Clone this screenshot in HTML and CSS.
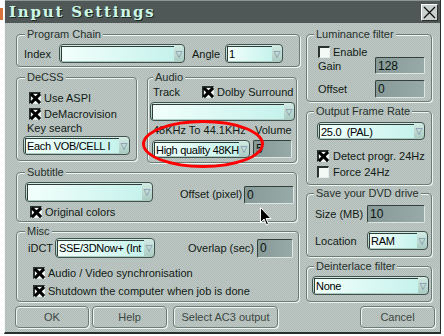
FILE: index.html
```html
<!DOCTYPE html>
<html lang="en">

<head>
    <meta charset="UTF-8">
    <title>Input Settings</title>
    <link rel="stylesheet" href="styles.css">
</head>

<body>
    <div class="edge"><div class="mark"></div></div>

    <div class="window">
        <div class="titlebar">
            <span class="title">Input Settings</span>
            <span class="close">
                <svg width="13" height="13" viewBox="0 0 13 13"><path d="M1 1L12 12M12 1L1 12" stroke="#111" stroke-width="1.3" fill="none"/></svg>
            </span>
        </div>

        <div class="main">
            <div class="col-left">
                <fieldset class="group pc">
                    <legend>Program Chain</legend>
                    <div class="pc-row">
                        <span class="pc-lbl">Index</span>
                        <div class="combo c-index"><span class="val"></span><span class="arr">▽</span></div>
                        <span class="pc-lbl2">Angle</span>
                        <div class="combo c-angle"><span class="val">1</span><span class="arr">▽</span></div>
                    </div>
                </fieldset>

                <div class="split">
                    <fieldset class="group decss">
                        <legend>DeCSS</legend>
                        <div class="decss-body">
                            <label class="chk"><span class="box on"></span>Use ASPI</label>
                            <label class="chk"><span class="box on"></span>DeMacrovision</label>
                            <div class="keylbl">Key search</div>
                            <div class="combo c-key"><span class="val">Each VOB/CELL I</span><span class="arr">▽</span></div>
                        </div>
                    </fieldset>

                    <fieldset class="group audio">
                        <legend>Audio</legend>
                        <div class="audio-body">
                            <div class="a-top">
                                <span class="a-track">Track</span>
                                <label class="chk"><span class="box on"></span>Dolby Surround</label>
                            </div>
                            <div class="combo c-track"><span class="val"></span><span class="arr">▽</span></div>
                            <div class="a-labels"><span class="a-rate">48KHz To 44.1KHz</span><span>Volume</span></div>
                            <div class="a-bottom">
                                <div class="combo c-hq"><span class="val">High quality 48KH</span><span class="arr">▽</span></div>
                                <span class="num n-vol">5</span>
                            </div>
                        </div>
                    </fieldset>
                </div>

                <fieldset class="group subtitle">
                    <legend>Subtitle</legend>
                    <div class="sub-body">
                        <div class="sub-left">
                            <div class="combo c-sub"><span class="val"></span><span class="arr">▽</span></div>
                            <label class="chk"><span class="box on"></span>Original colors</label>
                        </div>
                        <span class="sub-lbl">Offset (pixel)</span>
                        <span class="num n-sub">0</span>
                    </div>
                </fieldset>

                <fieldset class="group misc">
                    <legend>Misc</legend>
                    <div class="misc-body">
                        <div class="misc-top">
                            <span class="m-idct">iDCT</span>
                            <div class="combo c-idct"><span class="val">SSE/3DNow+ (Int</span><span class="arr">▽</span></div>
                            <span class="m-ov">Overlap (sec)</span>
                            <span class="num n-ov">0</span>
                        </div>
                        <label class="chk"><span class="box on"></span>Audio / Video synchronisation</label>
                        <label class="chk"><span class="box on"></span>Shutdown the computer when job is done</label>
                    </div>
                </fieldset>
            </div>

            <div class="col-right">
                <fieldset class="group lum">
                    <legend>Luminance filter</legend>
                    <div class="lum-body">
                        <label class="chk"><span class="box"></span>Enable</label>
                        <div class="f-row gain"><span class="flbl">Gain</span><span class="num n-lum">128</span></div>
                        <div class="f-row offset"><span class="flbl">Offset</span><span class="num n-lum">0</span></div>
                    </div>
                </fieldset>

                <fieldset class="group ofr">
                    <legend>Output Frame Rate</legend>
                    <div class="ofr-body">
                        <div class="combo c-fps"><span class="val">25.0&nbsp; (PAL)</span><span class="arr">▽</span></div>
                        <label class="chk"><span class="box on"></span>Detect progr. 24Hz</label>
                        <label class="chk"><span class="box"></span>Force 24Hz</label>
                    </div>
                </fieldset>

                <fieldset class="group dvd">
                    <legend>Save your DVD drive</legend>
                    <div class="dvd-body">
                        <div class="f-row"><span class="dlbl">Size (MB)</span><span class="num n-size">10</span></div>
                        <div class="f-row loc"><span class="dlbl">Location</span>
                            <div class="combo c-loc"><span class="val">RAM</span><span class="arr">▽</span></div>
                        </div>
                    </div>
                </fieldset>

                <fieldset class="group deint">
                    <legend>Deinterlace filter</legend>
                    <div class="deint-body">
                        <div class="combo c-deint"><span class="val">None</span><span class="arr">▽</span></div>
                    </div>
                </fieldset>
            </div>
        </div>

        <div class="buttons">
            <span class="btn ok">OK</span>
            <span class="btn help">Help</span>
            <span class="btn ac3">Select AC3 output</span>
            <span class="btn cancel">Cancel</span>
        </div>

        <!-- annotation drawn over the dialog -->
        <div class="ellipse"></div>
        <svg class="cursor" width="12" height="19" viewBox="0 0 12 19">
            <path d="M.5.5v15l3.5-3.5 2.5 6 2-1-2.5-5.5H11z" fill="#000" stroke="#fff"/>
        </svg>
    </div>
</body>

</html>
```

FILE: styles.css
```css
html,
body {
    height: 100%;
    margin: 0;
}

body {
    display: flex;
    background: #fff;
    font-family: "Liberation Sans", Arial, sans-serif;
    font-size: 11px;
    color: #111a15;
    overflow: hidden;
}

.edge {
    width: 4px;
}

.edge .mark {
    margin-top: 8px;
    width: 3px;
    height: 12px;
    background: #d7733a;
}

.window,
legend,
.btn {
    background-color: #b6c2bd;
    background-image: repeating-conic-gradient(rgba(255, 255, 255, 0.12) 0 25%, rgba(0, 0, 0, 0.04) 0 50%);
    background-size: 2px 2px;
    background-attachment: fixed;
}

.window {
    position: relative;
    width: 437px;
    height: 334px;
    box-sizing: border-box;
    border-left: 1px solid #f2f7f4;
    border-right: 1px solid #28302d;
    border-bottom: 2px solid #28302d;
}

.titlebar {
    height: 23px;
    box-sizing: border-box;
    display: flex;
    align-items: center;
    padding-left: 4px;
    background: #4f5857;
    border-top: 1px solid #8c9694;
}

.title {
    font-family: "DejaVu Serif", serif;
    font-weight: bold;
    font-size: 15px;
    letter-spacing: 1.8px;
    color: #cbf7e4;
    text-shadow: 1px 1px 0 #1c2622;
}

.close {
    margin-left: auto;
    margin-right: 2px;
    width: 17px;
    height: 17px;
    box-sizing: border-box;
    display: flex;
    align-items: center;
    justify-content: center;
    background: #c9d1cf;
    border: 1px solid;
    border-color: #fff #2a2f2e #2a2f2e #fff;
}

.main {
    display: flex;
    gap: 6px;
    padding: 5px 0 0 11px;
}

.col-left {
    width: 284px;
}

.col-right {
    width: 126px;
}

/* group boxes */

.group {
    margin: 0;
    padding: 0;
    min-width: 0;
    box-sizing: border-box;
    border: 1px solid #6c7b76;
    border-radius: 4px;
    box-shadow: inset 1px 1px 0 #edf5f1, 1px 1px 0 #edf5f1;
}

legend {
    margin-left: 8px;
    padding: 0 2px;
    height: 13px;
    line-height: 13px;
    color: #26302c;
}

.col-right legend {
    margin-left: 7px;
}

.pc {
    height: 39px;
}

.split {
    display: flex;
    margin-top: 4px;
}

.decss {
    width: 121px;
    height: 90px;
}

.audio {
    width: 150px;
    height: 92px;
    margin-left: 10px;
}

.audio legend {
    margin-left: 5px;
}

.subtitle {
    width: 281px;
    height: 56px;
    margin-top: 3px;
}

.misc {
    width: 283px;
    height: 77px;
    margin-top: 3px;
}

.lum {
    height: 74px;
}

.ofr {
    height: 80px;
    margin-top: 3px;
}

.dvd {
    height: 70px;
    margin-top: 2px;
}

.deint {
    height: 42px;
    margin-top: 3px;
}

/* controls */

.combo {
    display: flex;
    height: 19px;
    box-sizing: border-box;
    padding: 1px 0 1px 1px;
    border: 1px solid #42524c;
    border-radius: 4px;
    background: linear-gradient(#d3ece5, #a9c9c1);
}

.combo .val {
    flex: 1;
    min-width: 0;
    overflow: hidden;
    white-space: nowrap;
    padding-left: 1px;
    border-top: 1px solid #2f3c37;
    border-left: 1px solid #2f3c37;
    background: linear-gradient(90deg, #f2fffb, #c6f2ec);
    font-size: 11px;
    letter-spacing: -0.3px;
    line-height: 14px;
    color: #000;
}

.combo .arr {
    width: 10px;
    display: flex;
    align-items: center;
    justify-content: center;
    font-family: "DejaVu Sans", sans-serif;
    font-size: 9px;
    color: #6a7a98;
}

.num {
    height: 18px;
    box-sizing: border-box;
    padding-left: 2px;
    border: 1px solid;
    border-color: #34403c #dce6e2 #dce6e2 #34403c;
    border-radius: 2px;
    background: linear-gradient(90deg, #879a98, #98aaa7);
    font-size: 12px;
    line-height: 16px;
    color: #0a1410;
}

.chk {
    display: flex;
    align-items: center;
    gap: 3px;
    white-space: nowrap;
}

.box {
    position: relative;
    flex: none;
    width: 12px;
    height: 12px;
    box-sizing: border-box;
    border-style: solid;
    border-width: 2px 1px 1px 2px;
    border-color: #2a322f #e6eeea #e6eeea #2a322f;
    background: #f3faf6;
}

.box.on::before,
.box.on::after {
    content: "";
    position: absolute;
    left: -2px;
    top: 3px;
    width: 13px;
    height: 3px;
    background: #000;
    transform: rotate(45deg);
}

.box.on::after {
    transform: rotate(-45deg);
}

/* program chain */

.pc-row {
    display: flex;
    align-items: center;
    padding: 3px 0 0 7px;
}

.pc-lbl {
    width: 35px;
}

.c-index {
    width: 126px;
}

.pc-lbl2 {
    width: 33px;
    margin-left: 7px;
}

.c-angle {
    width: 58px;
}

/* decss */

.decss-body {
    padding: 6px 0 0 12px;
}

.decss-body .chk {
    height: 16px;
}

.keylbl {
    margin-left: -2px;
    height: 13px;
    line-height: 13px;
}

.c-key {
    width: 107px;
    margin: 1px 0 0 -6px;
}

/* audio */

.audio-body {
    padding: 1px 0 0 5px;
}

.a-top {
    display: flex;
    align-items: center;
    height: 14px;
}

.a-track {
    width: 49px;
}

.c-track {
    width: 145px;
    margin: 3px 0 0 -3px;
}

.a-labels {
    display: flex;
    height: 13px;
    line-height: 13px;
    margin-top: 3px;
}

.a-rate {
    width: 102px;
}

.a-bottom {
    display: flex;
    margin-top: 3px;
}

.c-hq {
    width: 98px;
    height: 18px;
    margin-left: -1px;
}

.n-vol {
    width: 39px;
    margin-left: 3px;
}

/* subtitle */

.sub-body {
    display: flex;
    align-items: flex-start;
    padding: 3px 0 0 8px;
}

.c-sub {
    width: 128px;
    height: 20px;
}

.sub-left .chk {
    height: 12px;
    margin: 4px 0 0 5px;
}

.sub-lbl {
    width: 64px;
    margin: 6px 0 0 27px;
    line-height: 13px;
}

.n-sub {
    width: 50px;
    margin-top: 4px;
}

/* misc */

.misc-body {
    padding-left: 11px;
}

.misc-top {
    display: flex;
    align-items: center;
    height: 20px;
}

.m-idct {
    width: 27px;
}

.c-idct {
    width: 100px;
    height: 20px;
}

.m-ov {
    width: 69px;
    margin-left: 33px;
}

.n-ov {
    width: 36px;
    height: 19px;
}

.misc-body .chk {
    height: 18px;
    margin-left: 5px;
}

.misc-top + .chk {
    margin-top: 6px;
}

/* right column */

.lum-body {
    padding: 5px 0 0 11px;
}

.lum-body .chk {
    height: 11px;
    align-items: flex-start;
}

.f-row {
    display: flex;
    align-items: center;
}

.flbl {
    width: 57px;
}

.n-lum {
    width: 50px;
}

.gain .num {
    height: 17px;
}

.offset {
    margin-top: 6px;
}

.ofr-body {
    padding: 4px 0 0 10px;
}

.c-fps {
    width: 108px;
    height: 18px;
}

.ofr-body .chk {
    height: 16px;
    gap: 4px;
}

.c-fps + .chk {
    margin-top: 8px;
}

.dvd-body {
    padding: 5px 0 0 8px;
}

.dlbl {
    width: 52px;
}

.n-size {
    width: 58px;
}

.loc {
    margin-top: 8px;
}

.c-loc {
    width: 61px;
}

.deint-body {
    padding: 3px 0 0 5px;
}

.c-deint {
    width: 117px;
}

/* buttons */

.buttons {
    display: flex;
    padding: 4px 5px 0 10px;
}

.btn {
    height: 22px;
    box-sizing: border-box;
    display: flex;
    align-items: center;
    justify-content: center;
    border: 1px solid #6c7b76;
    border-radius: 4px;
    box-shadow: inset 1px 1px 0 #edf5f1, 1px 1px 0 #edf5f1;
    color: #3c4743;
}

.ok {
    width: 74px;
}

.help {
    width: 75px;
    margin-left: 3px;
}

.ac3 {
    width: 105px;
    margin-left: 6px;
}

.cancel {
    width: 75px;
    margin-left: auto;
}

/* annotation overlay */

.ellipse {
    position: absolute;
    left: 137px;
    top: 120px;
    width: 122px;
    height: 48px;
    box-sizing: border-box;
    border: 3px solid #f00;
    border-radius: 50%;
}

.cursor {
    position: absolute;
    left: 255px;
    top: 207px;
}
```
